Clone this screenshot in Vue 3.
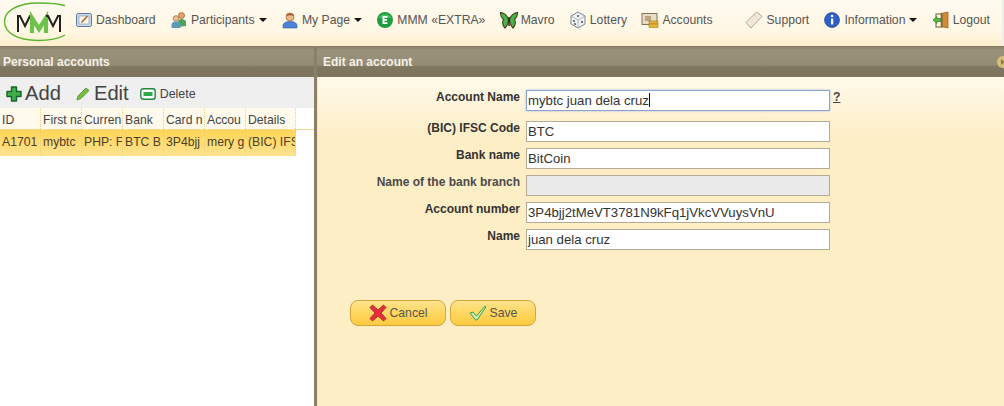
<script setup>
const navLeft = [
  { label: 'Dashboard', icon: 'dash' },
  { label: 'Participants', icon: 'people', caret: true },
  { label: 'My Page', icon: 'user', caret: true },
  { label: 'MMM «EXTRA»', icon: 'extra' },
  { label: 'Mavro', icon: 'fly' },
  { label: 'Lottery', icon: 'dice' },
  { label: 'Accounts', icon: 'acc' },
]
const navRight = [
  { label: 'Support', icon: 'ticket' },
  { label: 'Information', icon: 'info', caret: true },
  { label: 'Logout', icon: 'door' },
]
// the grid columns are narrow, so only the part of each value that fits is kept
const cols = [
  { head: 'ID', cell: 'A1701', w: 41 },
  { head: 'First na', cell: 'mybtc', w: 41 },
  { head: 'Curren', cell: 'PHP: F', w: 41 },
  { head: 'Bank', cell: 'BTC B', w: 41 },
  { head: 'Card n', cell: '3P4bjj', w: 41 },
  { head: 'Accou', cell: 'mery g', w: 41 },
  { head: 'Details', cell: '(BIC) IFS', w: 50 },
]
const fields = [
  { label: 'Account Name', value: 'mybtc juan dela cruz', focus: true },
  { label: '(BIC) IFSC Code', value: 'BTC' },
  { label: 'Bank name', value: 'BitCoin' },
  { label: 'Name of the bank branch', value: '', disabled: true },
  { label: 'Account number', value: '3P4bjj2tMeVT3781N9kFq1jVkcVVuysVnU' },
  { label: 'Name', value: 'juan dela cruz' },
]
</script>

<template>
  <div class="page">
    <header class="nav">
      <svg class="logo" width="66" height="40" viewBox="0 0 66 40">
        <path d="M65 3.500C58 1.500 50 1 38 1C16 1 4.500 10 4.500 19.500C4.500 30 16 38.500 38 38.500C50 38.500 58 37 65 33" fill="none" stroke="#5cb531" stroke-width="1.400" />
        <path d="M18 30V14H20L25 24L30 14H32" fill="none" stroke="#222" stroke-width="2" />
        <path d="M32 31V16L39 27L46 16V31" fill="none" stroke="#6cc24a" stroke-width="4.200" />
        <path d="M46 14H48L53 24L58 14H60V30" fill="none" stroke="#222" stroke-width="2" />
      </svg>
      <nav class="nav-group">
        <a v-for="item in navLeft" :key="item.label" class="nav-item">
          <svg class="nav-icon" width="18" height="18" viewBox="0 0 18 18">
            <template v-if="item.icon === 'dash'">
              <rect x="1.500" y="2.500" width="15" height="13" rx="2" fill="#c9d8ea" stroke="#5d7898" />
              <rect x="4" y="5" width="10" height="8" fill="#fbf8ee" stroke="#8f9db0" stroke-width=".7" />
              <path d="M6.500 11.500L12.500 5" stroke="#a8692e" stroke-width="1.600" />
            </template>
            <template v-else-if="item.icon === 'people'">
              <circle cx="11.500" cy="4.500" r="3" fill="#e0a36f" stroke="#a2572b" stroke-width=".7" />
              <path d="M8 16V11C8 9 10 8 11.500 8S16 9 16 11V15Z" fill="#4fa05a" />
              <circle cx="6" cy="7.500" r="2.800" fill="#eabd92" stroke="#8a6a3a" stroke-width=".7" />
              <path d="M1.500 17V13.500C1.500 11.500 4 10.500 6 10.500S10.500 11.500 10.500 13.500V17Z" fill="#5b9bb7" />
            </template>
            <template v-else-if="item.icon === 'user'">
              <circle cx="9" cy="6" r="4" fill="#eab98c" stroke="#a4592c" stroke-width=".7" />
              <path d="M5 5C5 1.500 13 1.500 13 5C10 4 8 4 5 5Z" fill="#a4592c" />
              <path d="M2 17V14.500C2 12 5 10.500 9 10.500S16 12 16 14.500V17Z" fill="#4d82d6" stroke="#2f5ea8" stroke-width=".6" />
            </template>
            <template v-else-if="item.icon === 'extra'">
              <circle cx="9" cy="9" r="8" fill="#1f9e3f" />
              <path d="M2.500 7A7 6 0 0 1 15.500 7Z" fill="#5fce74" opacity=".6" />
              <path d="M6.500 5H11.500V6.700H8.400V8.100H11V9.800H8.400V11.300H11.500V13H6.500Z" fill="#fff" />
            </template>
            <template v-else-if="item.icon === 'fly'">
              <path d="M8.500 8C6 3 3 1.500 .5 1.500C.5 5 1.500 7 3.500 8.500C2 10.500 2.500 14.500 5 17C7 15 8.500 12 8.500 8Z" fill="#43b649" stroke="#4c3416" stroke-width="1.100" />
              <path d="M9.500 8C12 3 15 1.500 17.500 1.500C17.500 5 16.500 7 14.500 8.500C16 10.500 15.500 14.500 13 17C11 15 9.500 12 9.500 8Z" fill="#43b649" stroke="#4c3416" stroke-width="1.100" />
              <path d="M9 6V15" stroke="#2e1d0c" stroke-width="1.400" />
            </template>
            <template v-else-if="item.icon === 'dice'">
              <path d="M9 1L16 5V13L9 17L2 13V5Z" fill="#eef0f2" stroke="#7b8794" />
              <path d="M9 9V17M9 9L2 5M9 9L16 5" stroke="#9aa4ae" stroke-width=".7" />
              <circle cx="9" cy="5" r="1" fill="#555" /><circle cx="5" cy="10" r="1" fill="#555" /><circle cx="6" cy="13" r="1" fill="#555" /><circle cx="13" cy="11" r="1.100" fill="#555" />
            </template>
            <template v-else-if="item.icon === 'acc'">
              <rect x="1" y="2.500" width="15" height="11" fill="#e8dcc4" stroke="#85735a" />
              <rect x="4" y="5" width="6" height="5" fill="#b7a67f" />
              <rect x="8" y="10" width="9" height="3" fill="#e5b53a" stroke="#a77e1d" stroke-width=".6" />
              <rect x="8" y="13" width="9" height="3.500" fill="#e5b53a" stroke="#a77e1d" stroke-width=".6" />
            </template>
          </svg>
          <span>{{ item.label }}</span>
          <i v-if="item.caret" class="caret"></i>
        </a>
      </nav>
      <nav class="nav-group right">
        <a v-for="item in navRight" :key="item.label" class="nav-item">
          <svg class="nav-icon" width="18" height="18" viewBox="0 0 18 18">
            <template v-if="item.icon === 'ticket'">
              <path d="M1 11.500L11.500 1L17 5.500L6 17Z" fill="#f2e7d8" stroke="#b5a898" />
              <path d="M9 4L13.500 8.500" stroke="#c9bbaa" stroke-dasharray="1 1" />
            </template>
            <template v-else-if="item.icon === 'info'">
              <circle cx="9" cy="9" r="7.500" fill="#2f5fc9" stroke="#23479a" stroke-width=".7" />
              <rect x="8" y="7.500" width="2.200" height="6" fill="#fff" />
              <circle cx="9.100" cy="5" r="1.300" fill="#fff" />
            </template>
            <template v-else>
              <path d="M9 2.500L16 1V17L9 15.500Z" fill="#d48a35" stroke="#96591b" stroke-width=".7" />
              <rect x="4" y="3" width="6" height="13" fill="none" stroke="#6a5a3c" />
              <path d="M1 9L5 5.500V7.500H9V10.500H5V12.500Z" fill="#58b947" stroke="#2f7a25" stroke-width=".7" />
            </template>
          </svg>
          <span>{{ item.label }}</span>
          <i v-if="item.caret" class="caret"></i>
        </a>
      </nav>
    </header>

    <main class="panels">
      <section class="left">
        <h2 class="bar">Personal accounts</h2>
        <div class="toolbar">
          <button class="tool big add">
            <svg width="16" height="16" viewBox="0 0 16 16">
              <path d="M5.500 1H10.500V5.500H15V10.500H10.500V15H5.500V10.500H1V5.500H5.500Z" fill="#3fae49" stroke="#14672a" stroke-width="1.400" stroke-linejoin="round" />
            </svg>
            Add
          </button>
          <button class="tool big edit">
            <svg width="16" height="16" viewBox="0 0 16 16">
              <path d="M2 14L3 10L11 2L14 4.500L6 12.500Z" fill="#76bd45" stroke="#4d8f2a" stroke-width=".8" />
            </svg>
            Edit
          </button>
          <button class="tool small">
            <svg width="16" height="12" viewBox="0 0 16 12">
              <rect x=".8" y=".8" width="14.400" height="10.400" rx="2.500" fill="#fff" stroke="#1f8a3a" stroke-width="1.400" />
              <rect x="3.500" y="4" width="9" height="4" fill="#2eaa4a" />
            </svg>
            Delete
          </button>
        </div>
        <div class="grid">
          <div class="row head">
            <div v-for="col in cols" :key="col.head" class="cell" :style="{ width: col.w + 'px' }">{{ col.head }}</div>
          </div>
          <div class="row selected">
            <div v-for="col in cols" :key="col.head" class="cell" :style="{ width: col.w + 'px' }">{{ col.cell }}</div>
          </div>
        </div>
      </section>

      <section class="right-panel">
        <h2 class="bar">
          Edit an account
          <span class="collapse"></span>
        </h2>
        <div class="body">
          <form class="form">
            <template v-for="f in fields" :key="f.label">
              <label class="lbl" :class="{ muted: f.disabled }">{{ f.label }}</label>
              <div class="field">
                <div class="input" :class="{ focus: f.focus, disabled: f.disabled }">{{ f.value }}<i v-if="f.focus" class="cursor"></i></div>
                <a v-if="f.focus" class="help">?</a>
              </div>
            </template>
          </form>
          <div class="buttons">
            <button type="button" class="btn">
              <svg width="18" height="18" viewBox="0 0 18 18">
                <path d="M3.500 1L9 6L14.500 1L17 3.500L12 9L17 14.500L14.500 17L9 12L3.500 17L1 14.500L6 9L1 3.500Z" fill="#e4303a" stroke="#a81c26" stroke-width=".8" stroke-linejoin="round" />
              </svg>
              Cancel
            </button>
            <button type="button" class="btn">
              <svg width="18" height="18" viewBox="0 0 18 18">
                <path d="M1 9L4 8L7.500 12L16 2L17 3L8 16H6.500Z" fill="#c4efb0" stroke="#3fa24a" stroke-width="1" stroke-linejoin="round" />
              </svg>
              Save
            </button>
          </div>
        </div>
      </section>
    </main>
  </div>
</template>

<style>
html, body {
  margin: 0;
  background: #fff;
}
</style>

<style scoped>
.page {
  width: 1004px;
  height: 406px;
  overflow: hidden;
  font-family: "Liberation Sans", Arial, sans-serif;
  font-size: 12.2px;
  color: #444;
}

.nav {
  height: 46px;
  display: flex;
  align-items: center;
  background: linear-gradient(#fffaf0, #fff7e3 70%, #fdeecb);
  box-sizing: border-box;
  padding-right: 12px;
  border-right: 2px solid #eeeeee;
}
.logo {
  margin-right: 9px;
  flex: none;
  position: relative;
  top: -1px;
}
.nav-group {
  display: flex;
  gap: 14.3px;
  height: 100%;
  align-items: center;
  padding-bottom: 9px;
  box-sizing: border-box;
  padding-top: 2px;
}
.nav-group.right {
  margin-left: auto;
}
.nav-item {
  display: flex;
  align-items: center;
  gap: 3px;
  color: #555;
  white-space: nowrap;
}
.caret {
  width: 0;
  height: 0;
  border-left: 4px solid transparent;
  border-right: 4px solid transparent;
  border-top: 4px solid #111;
  margin-left: 1px;
}

.panels {
  display: flex;
  height: 360px;
}
.left {
  width: 314px;
  flex: none;
  background: #fff;
  border-right: 3px solid #8a8068;
}
.right-panel {
  flex: 1;
  display: flex;
  flex-direction: column;
}
.bar {
  height: 31px;
  margin: 0;
  padding: 0 0 0 3px;
  display: flex;
  align-items: center;
  font-size: 12px;
  font-weight: bold;
  color: #f4f1e8;
  box-sizing: border-box;
  background: linear-gradient(#857b63 0, #9a917b 12%, #958c76 60%, #7f7660 68%, #7e755f 100%);
}
.right-panel .bar {
  padding-left: 6px;
  justify-content: space-between;
}
.collapse {
  width: 12px;
  height: 12px;
  margin-right: -5px;
  border-radius: 50%;
  background: #d8c17a;
  display: flex;
  align-items: center;
  padding-left: 4px;
  box-sizing: border-box;
}
.collapse::before {
  content: "";
  border-left: 4px solid #8a7a50;
  border-top: 3px solid transparent;
  border-bottom: 3px solid transparent;
}

.toolbar {
  height: 31px;
  display: flex;
  align-items: center;
  background: #efefef;
  padding-left: 6px;
  padding-top: 2px;
  box-sizing: border-box;
}
.tool {
  display: flex;
  align-items: center;
  border: 0;
  background: none;
  padding: 0;
  font-family: inherit;
  color: #444;
}
.tool.big {
  font-size: 20.2px;
  gap: 3px;
}
.tool.add {
  margin-right: 14px;
}
.tool.edit {
  margin-right: 11px;
}
.tool.small {
  font-size: 12.4px;
  gap: 4px;
}

.row {
  display: flex;
}
.cell {
  flex: none;
  box-sizing: border-box;
  padding-left: 2px;
  overflow: hidden;
  white-space: nowrap;
  border-right: 1px dotted #f0cf7a;
}
.head {
  height: 22px;
  box-sizing: border-box;
  border-bottom: 1px solid #f3d98f;
}
.head .cell {
  line-height: 24px;
  background: #fffaeb;
}
.selected {
  width: 296px;
  height: 26px;
  line-height: 25px;
  background: linear-gradient(#ffd558, #ffe28f);
  color: #4b4028;
}

.body {
  flex: 1;
  background: linear-gradient(#fffaeb 0, #fdeec6 60px, #fdeec6);
  border-left: 1px solid #f8e4b0;
}
.form {
  display: grid;
  grid-template-columns: 202px 1fr;
  column-gap: 6px;
  padding-top: 13px;
  grid-template-rows: 31px;
  grid-auto-rows: 27px;
}
.lbl {
  text-align: right;
  font-weight: bold;
  font-size: 12px;
  color: #333;
  line-height: 14px;
}
.lbl.muted {
  color: #4a4a4a;
}
.field {
  display: flex;
  align-items: flex-start;
}
.input {
  width: 304px;
  height: 21px;
  box-sizing: border-box;
  border: 1px solid #b3ab96;
  background: #fff;
  line-height: 20px;
  padding-left: 1px;
  color: #333;
  font-size: 13.2px;
  white-space: nowrap;
}
.input.focus {
  border: 1.5px solid #8da3cf;
  box-shadow: 0 0 2px #a8bbe0;
}
.input.disabled {
  background: #eaeaea;
}
.cursor {
  display: inline-block;
  width: 1px;
  height: 14px;
  background: #111;
  vertical-align: -2px;
}
.help {
  margin-left: 3px;
  font-weight: bold;
  color: #444;
  text-decoration: underline;
  line-height: 14px;
}

.buttons {
  display: flex;
  gap: 4px;
  margin: 44px 0 0 32px;
}
.btn {
  height: 26px;
  box-sizing: border-box;
  display: flex;
  align-items: center;
  justify-content: center;
  gap: 3px;
  border: 1px solid #d3a53b;
  border-radius: 8px;
  background: linear-gradient(#ffe48c, #ffd55c 55%, #fdca42);
  font-family: inherit;
  font-size: 12.2px;
  color: #555;
  padding: 0;
  width: 96px;
}
.btn + .btn {
  width: 86px;
}
</style>
